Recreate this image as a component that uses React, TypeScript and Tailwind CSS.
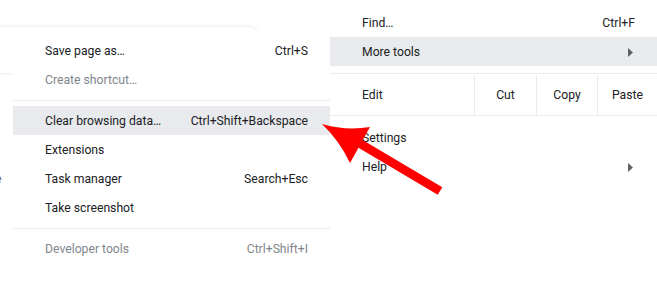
import React from "react";

type Item = {
  label: string;
  shortcut?: string;
  disabled?: boolean;
  active?: boolean;
  submenu?: boolean;
};

const moreTools: (Item | "sep")[] = [
  { label: "Save page as…", shortcut: "Ctrl+S" },
  { label: "Create shortcut…", disabled: true },
  "sep",
  { label: "Clear browsing data…", shortcut: "Ctrl+Shift+Backspace", active: true },
  { label: "Extensions" },
  { label: "Task manager", shortcut: "Search+Esc" },
  { label: "Take screenshot" },
  "sep",
  { label: "Developer tools", shortcut: "Ctrl+Shift+I", disabled: true },
];

const SubArrow = () => (
  <svg width="5" height="9" viewBox="0 0 5 9" className="fill-[#5f6368]">
    <path d="M0 0 L5 4.5 L0 9 Z" />
  </svg>
);

const MenuRow: React.FC<{ item: Item }> = ({ item }) => (
  <div
    className={`flex h-[29px] items-center justify-between pl-[32px] pt-[2px] ${
      item.submenu ? "pr-[24px]" : "pr-[22px]"
    } ${item.active ? "bg-[#e8eaed]" : ""} ${
      item.disabled ? "text-[#80868b]" : "text-[#202124]"
    }`}
  >
    <span>{item.label}</span>
    {item.shortcut && <span>{item.shortcut}</span>}
    {item.submenu && <SubArrow />}
  </div>
);

const Separator = () => (
  <div className="flex h-[12px] items-center">
    <div className="h-px w-full bg-[#e8eaed]" />
  </div>
);

export default function App() {
  return (
    <div
      className="relative flex h-[297px] w-[657px] overflow-hidden bg-white text-[12.2px]"
      style={{ fontFamily: "Roboto, 'Liberation Sans', sans-serif" }}
    >
      {/* window behind the menus */}
      <div className="absolute left-0 top-[27px] h-[46px] w-[262px] rounded-tr-[16px] bg-white shadow-[0_0_4px_rgba(0,0,0,0.13)]" />
      <div className="absolute left-[-5px] top-[170px] text-[#5f6368]">e</div>

      {/* More tools submenu */}
      <div className="relative z-10 w-[330px] pl-[13px]">
        <div className="mt-[30px] bg-white pt-[6px]">
          {moreTools.map((item, i) =>
            item === "sep" ? <Separator key={i} /> : <MenuRow key={i} item={item} />
          )}
        </div>
      </div>

      {/* Main menu */}
      <div className="relative z-10 flex-1 bg-white pt-[8px]">
        <MenuRow item={{ label: "Find…", shortcut: "Ctrl+F" }} />
        <MenuRow item={{ label: "More tools", active: true, submenu: true }} />
        <div className="mt-[7px] flex h-[43px] border-y border-[#e8eaed] pt-[2px] text-[#202124]">
          <div className="flex w-[144px] items-center pl-[32px]">Edit</div>
          <div className="flex w-[62px] items-center justify-center border-l border-[#e8eaed]">Cut</div>
          <div className="flex w-[61px] items-center justify-center border-l border-[#e8eaed]">Copy</div>
          <div className="flex flex-1 items-center justify-center border-l border-[#e8eaed]">Paste</div>
        </div>
        <div className="mt-[7px]">
          <MenuRow item={{ label: "Settings" }} />
          <MenuRow item={{ label: "Help", submenu: true }} />
        </div>
      </div>

      {/* annotation arrow */}
      <svg className="pointer-events-none absolute left-0 top-0 z-20" width="657" height="297">
        <line x1="354" y1="140" x2="440" y2="191" stroke="#ff0000" strokeWidth="9" />
        <path d="M322 124 Q346 131 370 127 L350 163 Q339 140 322 124 Z" fill="#ff0000" />
      </svg>
    </div>
  );
}
